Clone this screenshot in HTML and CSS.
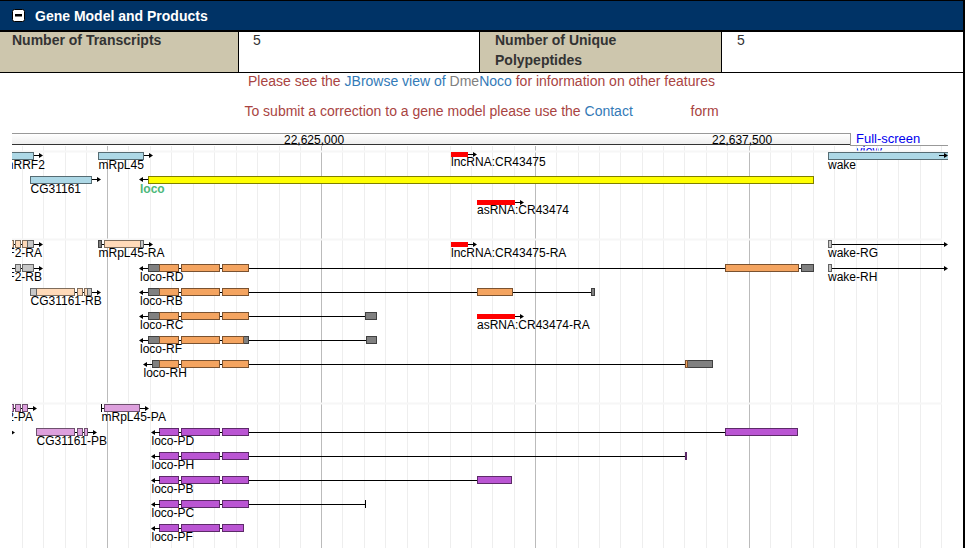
FILE: index.html
```html
<!DOCTYPE html>
<html lang="en">
<head>
    <meta charset="UTF-8">
    <title>Gene Model and Products</title>
    <link rel="stylesheet" href="styles.css">
</head>
<body>
<div class="section">
    <!-- Section header -->
    <div class="section-head">
        <svg class="toggle" width="13" height="13" viewBox="0 0 13 13"><rect x="0.5" y="0.5" width="12" height="12" rx="2" fill="#fff" stroke="#000"/><rect x="3" y="5" width="7" height="2.5" fill="#000"/></svg>
        <span>Gene Model and Products</span>
    </div>

    <!-- Counts -->
    <div class="counts">
        <div class="count-label"><span>Number of Transcripts</span></div>
        <div class="count-value"><span>5</span></div>
        <div class="count-label"><span>Number of Unique Polypeptides</span></div>
        <div class="count-value last"><span>5</span></div>
    </div>

    <p class="notice">Please see the <a href="#">JBrowse view of</a> <span class="muted">Dme</span><a href="#">Noco</a> for information on other features</p>
    <p class="notice">To submit a correction to a gene model please use the <a href="#">Contact</a> <span class="blank"></span> form</p>

    <!-- Genome browser -->
    <div class="browser">
        <div class="ruler-row">
            <div class="ruler"><span>22,625,000</span><span>22,637,500</span></div>
            <a class="fullscreen" href="#">Full-screen view</a>
        </div>

        <svg class="tracks" width="936" height="402" viewBox="12 146 936 402">
            <defs>
                <g id="arrow-r"><path class="shaft" d="M0 .5H7"/><path d="M9 .5L5-2V3z"/></g>
                <g id="arrow-l"><path class="shaft" d="M9 .5H2"/><path d="M0 .5L4-2V3z"/></g>
                <g id="exons">
                    <rect x="159.5" width="19" height="7"/>
                    <rect x="181.5" width="38" height="7"/>
                    <rect x="222.5" width="26" height="7"/>
                </g>
                <g id="exons-short">
                    <rect x="159.5" width="19" height="7"/>
                    <rect x="181.5" width="38" height="7"/>
                    <rect x="222.5" width="21" height="7"/>
                </g>
            </defs>

            <!-- grid -->
            <path class="minor" d="M22.5 146V548M43.5 146V548M65.5 146V548M86.5 146V548M128.5 146V548M150.5 146V548M171.5 146V548M193.5 146V548M214.5 146V548M236.5 146V548M257.5 146V548M279.5 146V548M300.5 146V548M342.5 146V548M364.5 146V548M385.5 146V548M407.5 146V548M428.5 146V548M450.5 146V548M471.5 146V548M492.5 146V548M514.5 146V548M556.5 146V548M578.5 146V548M599.5 146V548M620.5 146V548M642.5 146V548M663.5 146V548M684.5 146V548M706.5 146V548M727.5 146V548M770.5 146V548M791.5 146V548M813.5 146V548M834.5 146V548M856.5 146V548M877.5 146V548M898.5 146V548M920.5 146V548M941.5 146V548"/>
            <path class="major" d="M107.5 146V548M321.5 146V548M535.5 146V548M749.5 146V548"/>
            <path class="track-sep" d="M12 151.5H942M12 239.5H942M12 403.5H942"/>

            <!-- genes -->
            <g class="blue">
                <rect x="4.5" y="152.5" width="29" height="7"/>
                <rect x="98.5" y="152.5" width="45" height="7"/>
                <rect x="30.5" y="176.5" width="61" height="7"/>
                <rect x="828.5" y="152.5" width="130" height="7"/>
            </g>
            <use href="#arrow-r" x="34" y="155"/>
            <use href="#arrow-r" x="144" y="155"/>
            <use href="#arrow-r" x="92" y="179"/>
            <use href="#arrow-r" x="939" y="155"/>
            <rect class="yellow" x="148.5" y="176.5" width="665" height="7"/>
            <use href="#arrow-l" x="139" y="179"/>
            <rect class="red" x="451" y="152" width="17" height="5"/>
            <use href="#arrow-r" x="468" y="154"/>
            <rect class="red" x="477" y="200" width="38" height="5"/>
            <use href="#arrow-r" x="515" y="202"/>
            <text x="3.5" y="169">mRRF2</text>
            <text x="98.5" y="169">mRpL45</text>
            <text x="30.5" y="193">CG31161</text>
            <text class="current" x="140" y="193">loco</text>
            <text x="451" y="166">lncRNA:CR43475</text>
            <text x="477" y="214">asRNA:CR43474</text>
            <text x="828" y="169">wake</text>

            <!-- transcripts -->
            <path class="intron" d="M148 268.5H801M148 292.5H591M148 316.5H365M148 340.5H366M152 364.5H686M832 244.5H944M832 268.5H944"/>
            <path class="intron" d="M12 244.5H34M12 268.5H34M30 292.5H92M98 244.5H144"/>

            <g class="peach">
                <rect x="8.5" y="240.5" width="5" height="7"/>
                <rect x="15.5" y="240.5" width="5" height="7"/>
                <rect x="22.5" y="240.5" width="5" height="7"/>
                <rect x="104.5" y="240.5" width="36" height="7"/>
                <rect x="36.5" y="288.5" width="38" height="7"/>
                <rect x="77.5" y="288.5" width="5" height="7"/>
                <rect x="84.5" y="288.5" width="3" height="7"/>
            </g>
            <g class="pale">
                <rect x="27.5" y="240.5" width="6" height="7"/>
                <rect x="140.5" y="240.5" width="3" height="7"/>
                <rect x="15.5" y="264.5" width="5" height="7"/>
                <rect x="22.5" y="264.5" width="11" height="7"/>
                <rect x="30.5" y="288.5" width="6" height="7"/>
                <rect x="87.5" y="288.5" width="4" height="7"/>
                <rect x="828.5" y="240.5" width="3" height="7"/>
                <rect x="828.5" y="264.5" width="3" height="7"/>
            </g>
            <g class="utr">
                <rect x="98.5" y="240.5" width="3" height="7"/>
                <rect x="148.5" y="264.5" width="11" height="7"/>
                <rect x="801.5" y="264.5" width="12" height="7"/>
                <rect x="148.5" y="288.5" width="11" height="7"/>
                <rect x="591.5" y="288.5" width="3" height="7"/>
                <rect x="148.5" y="312.5" width="11" height="7"/>
                <rect x="365.5" y="312.5" width="11" height="7"/>
                <rect x="148.5" y="336.5" width="11" height="7"/>
                <rect x="243.5" y="336.5" width="5" height="7"/>
                <rect x="366.5" y="336.5" width="10" height="7"/>
                <rect x="152.5" y="360.5" width="7" height="7"/>
                <rect x="687.5" y="360.5" width="25" height="7"/>
            </g>
            <g class="mrna">
                <use href="#exons" y="264.5"/>
                <use href="#exons" y="288.5"/>
                <use href="#exons" y="312.5"/>
                <use href="#exons-short" y="336.5"/>
                <use href="#exons" y="360.5"/>
                <rect x="725.5" y="264.5" width="73" height="7"/>
                <rect x="477.5" y="288.5" width="35" height="7"/>
                <rect x="685.5" y="360.5" width="2" height="7"/>
            </g>
            <rect class="red" x="451" y="242" width="17" height="5"/>
            <use href="#arrow-r" x="468" y="244"/>
            <rect class="red" x="477" y="314" width="38" height="5"/>
            <use href="#arrow-r" x="515" y="316"/>

            <use href="#arrow-r" x="34" y="244"/>
            <use href="#arrow-r" x="34" y="268"/>
            <use href="#arrow-r" x="92" y="292"/>
            <use href="#arrow-r" x="144" y="244"/>
            <use href="#arrow-l" x="139" y="268"/>
            <use href="#arrow-l" x="139" y="292"/>
            <use href="#arrow-l" x="139" y="316"/>
            <use href="#arrow-l" x="139" y="340"/>
            <use href="#arrow-l" x="143" y="364"/>
            <use href="#arrow-r" x="939" y="244"/>
            <use href="#arrow-r" x="939" y="268"/>

            <text x="-20" y="257">mRRF2-RA</text>
            <text x="98.5" y="257">mRpL45-RA</text>
            <text x="451" y="257">lncRNA:CR43475-RA</text>
            <text x="828" y="257">wake-RG</text>
            <text x="-20" y="281">mRRF2-RB</text>
            <text x="140" y="281">loco-RD</text>
            <text x="828" y="281">wake-RH</text>
            <text x="30.5" y="305">CG31161-RB</text>
            <text x="140" y="305">loco-RB</text>
            <text x="140" y="329">loco-RC</text>
            <text x="477" y="329">asRNA:CR43474-RA</text>
            <text x="140" y="353">loco-RF</text>
            <text x="143.5" y="377">loco-RH</text>

            <!-- polypeptides -->
            <path class="intron" d="M159 432.5H725M159 456.5H686M159 480.5H477M159 504.5H365M159 528.5H243"/>
            <path class="intron" d="M12 408.5H28M101 408.5H105M36 432.5H88"/>
            <path class="intron" d="M365.5 500V508M101.5 404V412"/>

            <g class="plum">
                <rect x="8.5" y="404.5" width="5" height="7"/>
                <rect x="15.5" y="404.5" width="5" height="7"/>
                <rect x="22.5" y="404.5" width="5" height="7"/>
                <rect x="104.5" y="404.5" width="35" height="7"/>
                <rect x="36.5" y="428.5" width="38" height="7"/>
                <rect x="77.5" y="428.5" width="5" height="7"/>
                <rect x="84.5" y="428.5" width="3" height="7"/>
            </g>
            <g class="cds">
                <use href="#exons" y="428.5"/>
                <use href="#exons" y="452.5"/>
                <use href="#exons" y="476.5"/>
                <use href="#exons" y="500.5"/>
                <use href="#exons-short" y="524.5"/>
                <rect x="725.5" y="428.5" width="72" height="7"/>
                <rect x="685.5" y="452.5" width="1" height="7"/>
                <rect x="477.5" y="476.5" width="34" height="7"/>
            </g>
            <use href="#arrow-r" x="28" y="408"/>
            <use href="#arrow-r" x="140" y="408"/>
            <use href="#arrow-r" x="6" y="432"/>
            <use href="#arrow-r" x="88" y="432"/>
            <use href="#arrow-l" x="151" y="432"/>
            <use href="#arrow-l" x="151" y="456"/>
            <use href="#arrow-l" x="151" y="480"/>
            <use href="#arrow-l" x="151" y="504"/>
            <use href="#arrow-l" x="151" y="528"/>

            <text x="-27.5" y="421">mRRF2-PA</text>
            <text x="101.5" y="421">mRpL45-PA</text>
            <text x="36.5" y="445">CG31161-PB</text>
            <text x="151.5" y="445">loco-PD</text>
            <text x="151.5" y="469">loco-PH</text>
            <text x="151.5" y="493">loco-PB</text>
            <text x="151.5" y="517">loco-PC</text>
            <text x="151.5" y="541">loco-PF</text>
        </svg>
    </div>
</div>
</body>
</html>
```

FILE: styles.css
```css
/* Page */
html, body {
    margin: 0;
    height: 548px;
    overflow: hidden;
    background: #fff;
}

body {
    font-family: "Liberation Sans", Arial, sans-serif;
    font-size: 14px;
    color: #333;
}

.section {
    box-sizing: border-box;
    width: 965px;
    height: 548px;
    border-right: 2px solid #000;
}

/* Section header */
.section-head {
    display: flex;
    align-items: center;
    gap: 10px;
    height: 29px;
    padding-left: 12px;
    background: #003366;
    border-top: 1px solid #000;
    border-bottom: 2px solid #000;
    color: #fff;
    font-weight: bold;
}

.toggle {
    display: block;
}

/* Counts table */
.counts {
    display: grid;
    grid-template-columns: 239px 241px 242px 1fr;
    height: 40px;
    border-bottom: 1px solid #000;
}

.count-label,
.count-value {
    box-sizing: border-box;
    border-right: 1px solid #000;
    line-height: 20px;
}

.count-label span,
.count-value span {
    display: block;
    margin-top: -2px;
}

.count-label {
    padding: 0 30px 0 12px;
    background: #cdc6ad;
    font-weight: bold;
}

.count-label + .count-value + .count-label {
    padding-left: 15px;
}

.count-value {
    padding-left: 14px;
}

.count-value.last {
    padding-left: 15px;
    border-right: 0;
}

/* Notices */
.notice {
    margin: 0 0 14px;
    line-height: 16px;
    text-align: center;
    color: #a94442;
}

.notice a {
    color: #337ab7;
    text-decoration: none;
}

.notice .muted {
    color: #808080;
}

.blank {
    display: inline-block;
    width: 50px;
}

/* Browser ruler */
.browser {
    padding-left: 12px;
}

.ruler-row {
    display: flex;
    width: 936px;
    height: 13px;
}

.ruler {
    box-sizing: border-box;
    display: flex;
    gap: 368px;
    width: 838px;
    height: 12px;
    padding-left: 272px;
    border-top: 1px solid #999;
    border-bottom: 1px solid #333;
    background: linear-gradient(#fff, #eee);
    font-size: 12px;
    line-height: 12px;
    color: #000;
}

.fullscreen {
    box-sizing: border-box;
    flex: 1;
    padding-left: 5px;
    border-left: 1px solid #999;
    border-bottom: 1px solid #999;
    color: #0000ee;
    font-size: 13px;
    line-height: 12px;
    text-decoration: none;
}

/* Tracks */
.tracks {
    display: block;
    font-size: 12px;
}

.tracks text {
    fill: #000;
}

.tracks text.current {
    fill: #4cb87a;
    font-weight: bold;
}

.minor {
    fill: none;
    stroke: #eee;
}

.major {
    fill: none;
    stroke: #bbb;
}

.track-sep {
    fill: none;
    stroke: #f6f6f6;
    stroke-width: 2;
}

.shaft,
.intron {
    fill: none;
    stroke: #000;
}

.blue {
    fill: #add8e6;
    stroke: #566c73;
}

.yellow {
    fill: #ff0;
    stroke: #7f7f00;
}

.red {
    fill: #f00;
}

.peach {
    fill: #ffdab9;
    stroke: #7f6d5c;
}

.pale {
    fill: #c8c8c8;
    stroke: #646464;
}

.utr {
    fill: #808080;
    stroke: #404040;
}

.mrna {
    fill: #f4a460;
    stroke: #7a5230;
}

.plum {
    fill: #dda0dd;
    stroke: #6e506e;
}

.cds {
    fill: #ba55d3;
    stroke: #5d2a69;
}
```
